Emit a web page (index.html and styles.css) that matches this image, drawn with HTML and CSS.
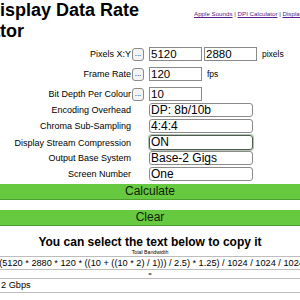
FILE: index.html
```html
<!DOCTYPE html>
<html>
<head>
<meta charset="utf-8">
<link rel="stylesheet" href="styles.css">
</head>
<body>
<div class="page">
  <header class="top">
    <h1 class="title">Display Data Rate Calculator</h1>
    <nav class="links"><a href="#">Apple Sounds</a> | <a href="#">DPI Calculator</a> | <a href="#">Display</a></nav>
  </header>

  <div class="form">
    <div class="row row-text">
      <span class="label">Pixels X:Y</span>
      <span class="cell-btn"><span class="dots">...</span></span>
      <span class="fields"><span class="input">5120</span><span class="input">2880</span><span class="unit">pixels</span></span>
    </div>
    <div class="row row-text">
      <span class="label">Frame Rate</span>
      <span class="cell-btn"><span class="dots">...</span></span>
      <span class="fields"><span class="input">120</span><span class="unit unit-fps">fps</span></span>
    </div>
    <div class="row row-text row-text-last">
      <span class="label">Bit Depth Per Colour</span>
      <span class="cell-btn"><span class="dots">...</span></span>
      <span class="fields"><span class="input">10</span></span>
    </div>
    <div class="row row-sel">
      <span class="label">Encoding Overhead</span>
      <span class="cell-btn"></span>
      <span class="fields"><span class="select">DP: 8b/10b</span></span>
    </div>
    <div class="row row-sel">
      <span class="label">Chroma Sub-Sampling</span>
      <span class="cell-btn"></span>
      <span class="fields"><span class="select">4:4:4</span></span>
    </div>
    <div class="row row-sel">
      <span class="label">Display Stream Compression</span>
      <span class="cell-btn"></span>
      <span class="fields"><span class="select select-focus">ON</span></span>
    </div>
    <div class="row row-sel">
      <span class="label">Output Base System</span>
      <span class="cell-btn"></span>
      <span class="fields"><span class="select">Base-2 Gigs</span></span>
    </div>
    <div class="row row-sel">
      <span class="label">Screen Number</span>
      <span class="cell-btn"></span>
      <span class="fields"><span class="select">One</span></span>
    </div>
  </div>

  <div class="bar bar-calc">Calculate</div>
  <div class="bar bar-clear">Clear</div>

  <h2 class="copy-title">You can select the text below to copy it</h2>
  <div class="sub">Total Bandwidth</div>
  <div class="result">
    <div class="res-row res-formula"><span>((5120 * 2880 * 120 * ((10 + ((10 * 2) / 1))) / 2.5) * 1.25) / 1024 / 1024 / 1024</span></div>
    <div class="res-row res-eq"><span>=</span></div>
    <div class="res-row res-value"><span>2 Gbps</span></div>
  </div>
</div>
</body>
</html>
```

FILE: styles.css
```css
html, body {
  margin: 0;
  padding: 0;
  overflow: hidden;
  background: #ffffff;
}

body {
  font-family: "Liberation Sans", Arial, sans-serif;
  color: #000;
}

.page {
  width: 300px;
}

.top {
  display: flex;
  align-items: flex-start;
  height: 42px;
}

.title {
  flex: none;
  width: 216px;
  margin: 0 0 0 -64px;
  text-indent: 51px;
  font-size: 18px;
  line-height: 21px;
  font-weight: bold;
}

.links {
  flex: none;
  margin-left: 42px;
  padding-top: 10px;
  font-size: 6.2px;
  line-height: 7px;
  white-space: nowrap;
  color: #333;
}

.links a {
  color: #551a8b;
  text-decoration: underline;
}

.form {
  margin-top: 5px;
  display: flex;
  flex-direction: column;
}

.row {
  display: grid;
  grid-template-columns: 131px 18px auto;
  align-items: center;
  height: 14px;
}

.row-text { margin-bottom: 6px; }
.row-text-last { margin-bottom: 2px; }
.row-sel { margin-bottom: 2px; }

.label {
  text-align: right;
  font-size: 9px;
  white-space: nowrap;
}

.cell-btn {
  display: flex;
  padding-left: 1px;
}

.dots {
  box-sizing: border-box;
  width: 12px;
  height: 13px;
  border: 1px solid #8a8a8a;
  border-radius: 3px;
  background: #f4f4f4;
  font-size: 8px;
  line-height: 9px;
  text-align: center;
  color: #111;
}

.fields {
  display: flex;
  align-items: center;
  gap: 2px;
}

.input {
  box-sizing: border-box;
  width: 53px;
  height: 14px;
  border: 1px solid #8a8a8a;
  padding-left: 1px;
  font-size: 11.5px;
  line-height: 12px;
}

.unit {
  margin-left: 3px;
  font-size: 8.5px;
}

.unit-fps { margin-left: 3px; }

.select {
  box-sizing: border-box;
  width: 104px;
  height: 14px;
  border: 1px solid #8a8a8a;
  border-radius: 3px;
  padding-left: 1px;
  font-size: 12px;
  line-height: 12px;
}

.select-focus {
  height: 15px;
  border-color: #4d5d4d;
  box-shadow: 0 0 0 1px rgba(90, 120, 90, 0.45);
}

.bar {
  box-sizing: border-box;
  height: 16px;
  background: #66c93f;
  border-bottom: 1px solid #4e9e30;
  text-align: center;
  font-size: 12px;
  line-height: 15px;
  color: #10200c;
}

.bar-calc { margin-top: 1px; }
.bar-clear { margin-top: 10px; }

.copy-title {
  margin: 9px 0 0;
  font-size: 12px;
  line-height: 14px;
  font-weight: bold;
  text-align: center;
}

.sub {
  font-size: 5.2px;
  line-height: 7px;
  text-align: center;
}

.result {
  border-top: 1px solid #bdbdbd;
}

.res-row {
  display: flex;
  justify-content: center;
  border-bottom: 1px solid #bdbdbd;
  white-space: nowrap;
}

.res-formula {
  height: 12px;
  font-size: 9.2px;
  line-height: 12px;
}

.res-eq {
  height: 8px;
  font-size: 6px;
  line-height: 8px;
}

.res-value {
  height: 13px;
  justify-content: flex-start;
  padding-left: 1px;
  font-size: 9.2px;
  line-height: 13px;
}
```
